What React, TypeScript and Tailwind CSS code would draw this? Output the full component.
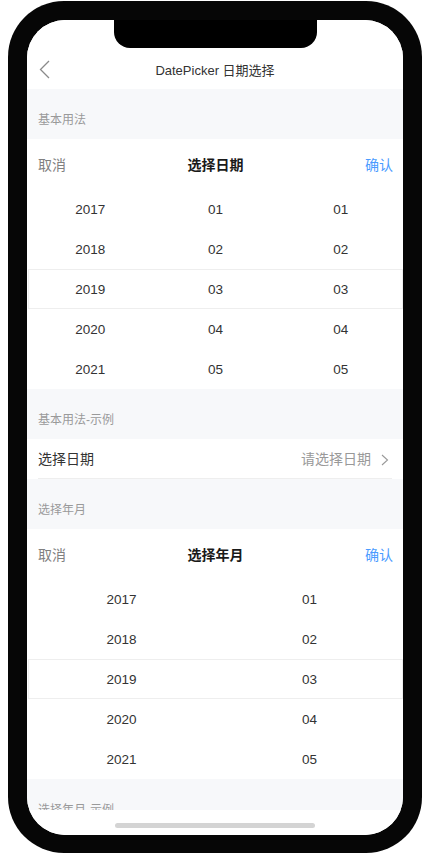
import React from "react";

const years = ["2017", "2018", "2019", "2020", "2021"];
const nums = ["01", "02", "03", "04", "05"];

function Band({ label }: { label: string }) {
  return (
    <div className="h-[50px] shrink-0 bg-[#f7f8fa] px-[11px] flex items-end pb-[11px]">
      <span className="text-[12px] leading-4 text-[#9a9a9a]">{label}</span>
    </div>
  );
}

function Column({ items }: { items: string[] }) {
  return (
    <div className="flex flex-col">
      {items.map((t) => (
        <div key={t} className="h-[40px] pt-[2px] flex items-center justify-center text-[13.5px] text-[#333333] pl-[1px]">
          {t}
        </div>
      ))}
    </div>
  );
}

function Picker({ title, cols }: { title: string; cols: string[][] }) {
  return (
    <div className="bg-white rounded-t-[4px] shrink-0">
      <div className="h-[50px] pl-[11px] pr-[10px] pt-[2px] flex items-center justify-between text-[14px]">
        <span className="text-[#808080]">取消</span>
        <span className="font-bold text-[#1a1a1a]">{title}</span>
        <span className="text-[#4a9cff]">确认</span>
      </div>
      <div className="relative h-[200px]">
        <div className="absolute left-[1px] right-0 top-[80px] h-[40px] border border-[#eeeeee]" />
        <div className={cols.length === 3 ? "grid grid-cols-3 relative" : "grid grid-cols-2 relative"}>
          {cols.map((c, i) => (
            <Column key={i} items={c} />
          ))}
        </div>
      </div>
    </div>
  );
}

export default function App() {
  return (
    <div className="w-[425px] h-[854px] bg-white overflow-hidden font-['Liberation_Sans','Noto_Sans_CJK_SC',sans-serif]">
      <div className="ml-[8px] mt-[1px] w-[414px] h-[852px] rounded-[56px] bg-[#060606] pl-[19px] pt-[19px]">
        <div className="relative w-[376px] h-[815px] rounded-[38px] bg-white overflow-hidden flex flex-col">
          <div className="h-[790px] overflow-hidden flex flex-col shrink-0">
            {/* nav */}
            <div className="h-[69px] shrink-0 bg-white relative">
              <svg className="absolute left-[12px] top-[40px]" width="11" height="19" viewBox="0 0 11 19" fill="none">
                <path d="M10 1 L1.5 9.5 L10 18" stroke="#8a8a8a" strokeWidth="1.3" />
              </svg>
              <div className="mt-[39px] h-[24px] flex items-center justify-center text-[13px] text-[#333333]">
                DatePicker 日期选择
              </div>
            </div>
            <Band label="基本用法" />
            <Picker title="选择日期" cols={[years, nums, nums]} />
            <Band label="基本用法-示例" />
            <div className="bg-white px-[11px] shrink-0">
              <div className="h-[40px] pt-[2px] flex items-center justify-between border-b border-[#eeeeee] text-[14px]">
                <span className="text-[#333333]">选择日期</span>
                <div className="flex items-center">
                  <span className="text-[#999999]">请选择日期</span>
                  <svg className="ml-[10px] mr-[3px]" width="8" height="12" viewBox="0 0 8 12" fill="none">
                    <path d="M1 1 L6.5 6 L1 11" stroke="#999999" strokeWidth="1.1" />
                  </svg>
                </div>
              </div>
            </div>
            <Band label="选择年月" />
            <Picker title="选择年月" cols={[years, nums]} />
            <Band label="选择年月-示例" />
          </div>
          <div className="flex-1 bg-white flex justify-center pt-[13px]">
            <div className="w-[200px] h-[5px] rounded-full bg-[#d4d4d4]" />
          </div>
          <div className="absolute top-0 left-[87px] w-[203px] h-[28px] rounded-b-[16px] bg-black" />
        </div>
      </div>
    </div>
  );
}
